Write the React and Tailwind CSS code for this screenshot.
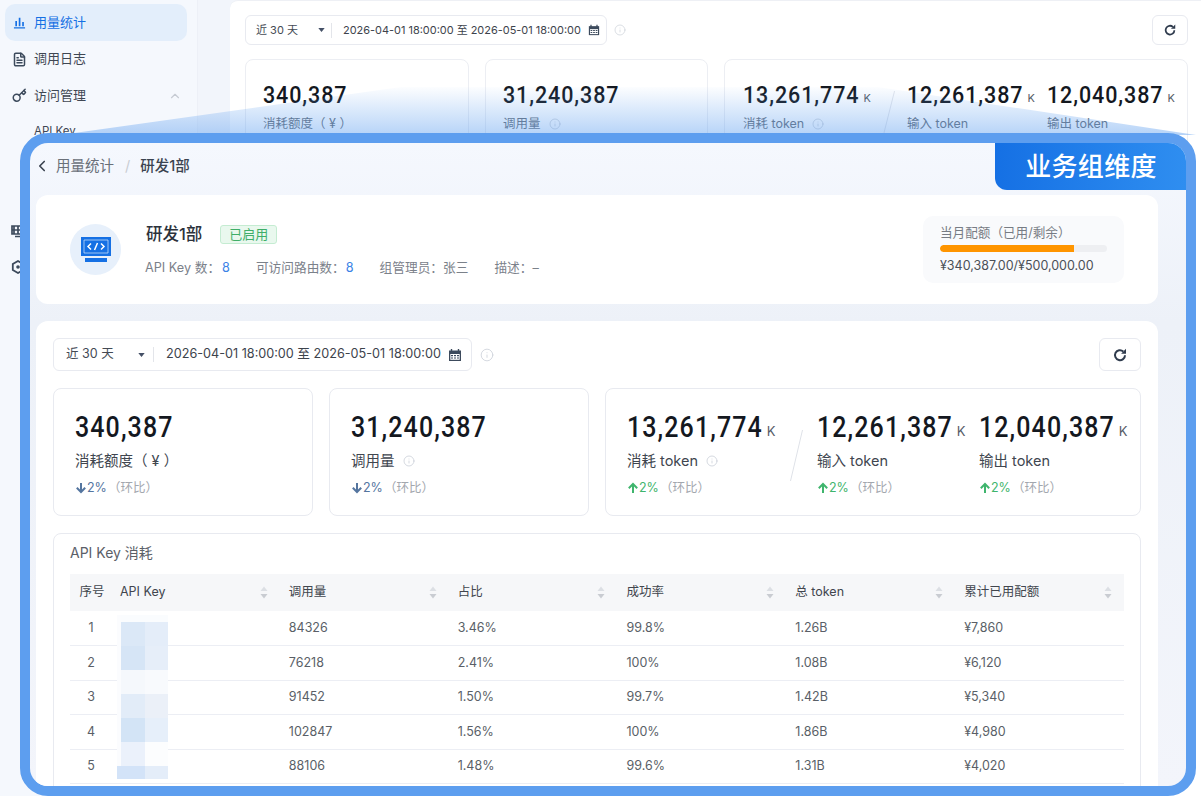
import { ChevronLeft, ChevronUp, Info, Key, FileText } from 'lucide-react'

const rows = [
  ['1', '84326', '3.46%', '99.8%', '1.26B', '¥7,860'],
  ['2', '76218', '2.41%', '100%', '1.08B', '¥6,120'],
  ['3', '91452', '1.50%', '99.7%', '1.42B', '¥5,340'],
  ['4', '102847', '1.56%', '100%', '1.86B', '¥4,980'],
  ['5', '88106', '1.48%', '99.6%', '1.31B', '¥4,020'],
]

const columns = ['API Key', '调用量', '占比', '成功率', '总 token', '累计已用配额']

// mosaic over the masked key column, written out row by row
const mosaic = [
  ['h-[7px] bg-[#fafcfe]', 'h-[7px] bg-[#fafcfe]'],
  ['h-[24px] bg-[#dbe8f7]', 'h-[24px] bg-[#e4edf9]'],
  ['h-[24px] bg-[#d6e5f6]', 'h-[24px] bg-[#e6eef9]'],
  ['h-[24px] bg-[#f5f8fc]', 'h-[24px] bg-[#f8fafd]'],
  ['h-[24px] bg-[#e2ecf8]', 'h-[24px] bg-[#ebf0f8]'],
  ['h-[24px] bg-[#d3e4f6]', 'h-[24px] bg-[#e6effa]'],
  ['h-[24px] bg-[#ebf1fb]', 'h-[24px] bg-[#fcfdfe]'],
  ['h-[13px] bg-[#d3e3f8]', 'h-[13px] bg-[#e4edf9]'],
]

function CalendarIcon({ className }) {
  return (
    <svg viewBox="0 0 14 14" className={className}>
      <path d="M1 2.5h12v10.5H1z" fill="#3c4a5c" />
      <path d="M3.5 1v2.5M10.5 1v2.5" stroke="#3c4a5c" strokeWidth="1.4" />
      <path d="M2.3 6h9.4v5.8H2.3z" fill="#fff" />
      <path d="M3 7h2v1.2H3zM6 7h2v1.2H6zM9 7h2v1.2H9zM3 9.4h2v1.2H3zM6 9.4h2v1.2H6zM9 9.4h2v1.2H9z" fill="#3c4a5c" />
    </svg>
  )
}

function ReloadIcon({ className }) {
  return (
    <svg viewBox="0 0 16 16" className={className}>
      <path d="M13 8.2a5 5 0 1 1-1.7-3.8" fill="none" stroke="#2f3b4d" strokeWidth="2" />
      <path d="M14 1.8v4.9H9.1z" fill="#2f3b4d" />
    </svg>
  )
}

function SortIcon() {
  return (
    <svg viewBox="0 0 8 13" className="w-[8px] h-[13px] shrink-0">
      <path d="M4 0.5L7.5 5H.5z" fill="#dcdfe4" />
      <path d="M4 12.5L.5 8h7z" fill="#c9ccd2" />
    </svg>
  )
}

function BarsIcon() {
  return (
    <svg viewBox="0 0 14 14" className="w-[13px] h-[13px]">
      <path d="M2.5 5.5h1.8v5.5H2.5zM6.2 2h1.8v9H6.2zM9.9 6.5h1.8V11H9.9zM1 12.2h12v1.3H1z" fill="#1570e4" />
    </svg>
  )
}

function TrendArrow({ up }) {
  return (
    <svg viewBox="0 0 12 12" className="w-[12px] h-[12px]">
      {up ? (
        <path d="M6 11V2M1.8 6.2L6 2l4.2 4.2" fill="none" stroke="#3fb56d" strokeWidth="2" />
      ) : (
        <path d="M6 1v9M1.8 5.8L6 10l4.2-4.2" fill="none" stroke="#54759f" strokeWidth="2" />
      )}
    </svg>
  )
}

function Slash({ className }) {
  return (
    <svg viewBox="0 0 13 51" preserveAspectRatio="none" className={className}>
      <path d="M12.5 0L.5 51" stroke="#dfe2e8" strokeWidth="1" fill="none" />
    </svg>
  )
}

function Change({ up }) {
  return (
    <div className="flex items-center text-[12.5px] leading-[16px] mt-[9px] h-[16px]">
      <TrendArrow up={up} />
      <span className={up ? 'text-[#3fb56d]' : 'text-[#54759f]'}>2%</span>
      <span className="text-[#a3a7ae] ml-[1px]">（环比）</span>
    </div>
  )
}

function Stat({ value, unit, label, info, up, down, small }) {
  return (
    <div>
      <div className={`flex items-baseline ${small ? 'h-[28px]' : 'h-[32px]'}`}>
        <span className={`inline-block scale-y-[1.15] font-['Roboto',sans-serif] font-medium text-[#14181f] whitespace-nowrap ${small ? 'text-[21.5px] leading-[28px] tracking-[0.9px]' : 'text-[25px] leading-[32px] tracking-[1.1px]'}`}>
          {value}
        </span>
        {unit && <span className={`text-[#555b66] ${small ? 'text-[11px] ml-[4px]' : 'text-[13px] ml-[4px]'}`}>{unit}</span>}
      </div>
      <div className={`flex items-center ${small ? 'text-[12.5px] leading-[16px] mt-[7px] text-[#666c75]' : 'text-[14.5px] leading-[20px] mt-[7px] text-[#40464f]'}`}>
        <span>{label}</span>
        {info && <Info className="text-[#c3c9d3] w-[12px] h-[12px] ml-[8px]" strokeWidth={1.4} />}
      </div>
      {up && <Change up />}
      {down && <Change />}
    </div>
  )
}

function Toolbar({ small }) {
  return (
    <div className="flex items-center">
      <div className={`flex items-center border border-[#e8eaf0] rounded-[6px] bg-white ${small ? 'h-[30px] w-[362px] pl-[10px]' : 'h-[33px] w-[419px] pl-[12px]'}`}>
        <span className={`text-[#444a54] whitespace-nowrap ${small ? 'text-[11px] w-[62px]' : 'text-[12.5px] w-[72px]'}`}>近 30 天</span>
        <svg viewBox="0 0 8 5" className="w-[7px] h-[4px]">
          <path d="M0 0h8L4 5z" fill="#445066" />
        </svg>
        <span className={`w-px h-[15px] bg-[#e3e5ea] ${small ? 'ml-[6px] mr-[11px]' : 'ml-[8px] mr-[12px]'}`} />
        <span className={`text-[#3d434c] whitespace-nowrap ${small ? 'text-[10.95px]' : 'text-[12.65px]'}`}>2026-04-01 18:00:00 至 2026-05-01 18:00:00</span>
        <CalendarIcon className={`ml-auto ${small ? 'w-[12px] h-[12px] mr-[6px]' : 'w-[14px] h-[14px] mr-[9px]'}`} />
      </div>
      <Info className={`text-[#c8cdd6] ${small ? 'w-[12px] h-[12px] ml-[7px]' : 'w-[14px] h-[14px] ml-[8px]'}`} strokeWidth={1.3} />
      <button className={`ml-auto flex items-center justify-center border border-[#e8eaf0] rounded-[6px] bg-white ${small ? 'w-[36px] h-[30px]' : 'w-[42px] h-[33px]'}`}>
        <ReloadIcon className={small ? 'w-[14px] h-[14px]' : 'w-[16px] h-[16px]'} />
      </button>
    </div>
  )
}

function Background() {
  return (
    <div className="flex h-full bg-[#f2f5fb]">
      {/* Sidebar */}
      <div className="w-[198px] shrink-0 bg-[#f5f8fd] border-r border-[#edf0f7] pl-[5px] pr-[10px] pt-[4px] text-[13px] text-[#3f4753]">
        <div className="flex items-center h-[37px] rounded-[10px] bg-[#e3eefb] text-[#1570e4] pl-[8px]">
          <BarsIcon />
          <span className="ml-[8px]">用量统计</span>
        </div>
        <div className="flex items-center h-[36px] pl-[7px]">
          <FileText className="w-[15px] h-[15px] text-[#3c4a5c]" strokeWidth={2.4} />
          <span className="ml-[7px]">调用日志</span>
        </div>
        <div className="flex items-center h-[37px] pl-[7px]">
          <Key className="w-[15px] h-[15px] text-[#3c4a5c]" strokeWidth={2.4} />
          <span className="ml-[7px]">访问管理</span>
          <ChevronUp className="w-[14px] h-[14px] text-[#c6cbd3] ml-auto mr-[5px]" />
        </div>
        <div className="h-[34px] pl-[29px] pt-[9px] text-[11.5px]">API Key</div>
        <div className="h-[65px]" />
        <div className="flex items-center h-[36px] pl-[6px]">
          <svg viewBox="0 0 14 14" className="w-[14px] h-[14px]">
            <path d="M1 2h12v8H1zM4 12.5h6M3 2v8M7 2v8M1 6h12" stroke="#3c4a5c" strokeWidth="1.7" fill="none" />
          </svg>
        </div>
        <div className="flex items-center h-[36px] pl-[6px]">
          <svg viewBox="0 0 14 14" className="w-[14px] h-[14px]">
            <path d="M7 1l5.2 3v6L7 13l-5.2-3V4z" stroke="#3c4a5c" strokeWidth="1.8" fill="none" />
            <circle cx="7" cy="7" r="1.8" fill="#3c4a5c" />
          </svg>
        </div>
      </div>

      {/* Main panel */}
      <div className="flex-1 min-w-0 ml-[32px] bg-white rounded-tl-[8px] border-t border-[#eef0f5] pl-[15px] pr-[13px] pt-[14px]">
        <Toolbar small />
        <div className="flex gap-[16px] mt-[14px] h-[120px]">
          <div className="w-[224px] shrink-0 border border-[#eceef3] rounded-[8px] pl-[17px] pt-[21px]">
            <Stat small value="340,387" label="消耗额度（ ¥ ）" />
          </div>
          <div className="w-[223px] shrink-0 border border-[#eceef3] rounded-[8px] pl-[17px] pt-[21px]">
            <Stat small value="31,240,387" label="调用量" info />
          </div>
          <div className="flex-1 min-w-0 flex border border-[#eceef3] rounded-[8px] pl-[18px] pt-[21px]">
            <div className="w-[140px] shrink-0">
              <Stat small value="13,261,774" unit="K" label="消耗 token" info />
            </div>
            <Slash className="w-[12px] h-[44px] mt-[10px] mr-[12px] shrink-0" />
            <div className="w-[140px] shrink-0">
              <Stat small value="12,261,387" unit="K" label="输入 token" />
            </div>
            <Stat small value="12,040,387" unit="K" label="输出 token" />
          </div>
        </div>
      </div>
    </div>
  )
}

function Detail() {
  return (
    <div className="relative h-full overflow-hidden rounded-[18px] bg-gradient-to-b from-[#f5f8fe] via-[#edf1f8] via-[28%] to-[#f3f5fb]">
      {/* Dimension tag */}
      <div className="absolute top-0 right-0 w-[191px] h-[47px] rounded-bl-[12px] bg-gradient-to-r from-[#1570e4] to-[#2f8ef0] flex items-center justify-center text-white text-[26px] font-medium tracking-[0.3px] pl-[1px] z-10">
        业务组维度
      </div>

      {/* Breadcrumb */}
      <div className="flex items-center h-[52px] pl-[3px] text-[14.5px] pb-[7px]">
        <ChevronLeft className="w-[18px] h-[18px] text-[#3b4350]" strokeWidth={2.2} />
        <span className="ml-[5px] text-[#6a7079]">用量统计</span>
        <span className="text-[#c9cdd3] ml-[11px] mr-[10px]">/</span>
        <span className="text-[#3b4350] font-medium">研发1部</span>
      </div>

      <div className="w-[1122px] ml-[6px]">
        {/* Group summary */}
        <div className="flex items-center h-[109px] bg-white rounded-[12px] pl-[34px] pr-[34px]">
          <div className="w-[51px] h-[51px] rounded-full bg-[#e7f0fb] flex items-center justify-center shrink-0">
            <svg viewBox="0 0 30 25" className="w-[30px] h-[25px]">
              <path d="M0 0h30v19H0z" fill="#1570e4" />
              <path d="M3 3h24v13H3z" fill="none" stroke="#d8e8fb" strokeWidth="0.7" />
              <path d="M10 6.5L7 9.5l3 3M20 6.5l3 3-3 3M16.5 6l-3 7" fill="none" stroke="#fff" strokeWidth="1.5" />
              <path d="M4 21h22v4H4z" fill="#1570e4" />
            </svg>
          </div>
          <div className="ml-[24px]">
            <div className="flex items-center">
              <span className="ml-[1px] text-[16.5px] font-medium text-[#2c323b]">研发1部</span>
              <span className="ml-[18px] h-[19px] px-[8px] flex items-center text-[13px] text-[#3fae68] bg-[#e9f8ee] border border-[#c5ecd2] rounded-[3px]">已启用</span>
            </div>
            <div className="flex items-center text-[12.7px] text-[#7b818a] mt-[11px]">
              <span>API Key 数：</span>
              <span className="text-[#3b82e6] ml-[2px]">8</span>
              <span className="ml-[26px]">可访问路由数：</span>
              <span className="text-[#3b82e6] ml-[1px]">8</span>
              <span className="ml-[26px]">组管理员：张三</span>
              <span className="ml-[26px]">描述：–</span>
            </div>
          </div>
          <div className="ml-auto w-[201px] h-[67px] rounded-[10px] bg-[#f9fafc] pl-[17px] pr-[17px] pt-[9px]">
            <div className="text-[12.6px] text-[#777c84] leading-[16px]">当月配额（已用/剩余）</div>
            <div className="h-[7px] rounded-full bg-[#eeeff2] mt-[4px] overflow-hidden">
              <div className="h-full w-[80%] rounded-l-full bg-[#ff9500]" />
            </div>
            <div className="text-[12.5px] text-[#4b5058] mt-[5px] leading-[17px] whitespace-nowrap">¥340,387.00/¥500,000.00</div>
          </div>
        </div>

        {/* Usage */}
        <div className="mt-[17px] bg-white rounded-[12px] px-[17px] pt-[17px] h-[500px]">
          <Toolbar />
          <div className="flex gap-[16px] mt-[17px] h-[128px]">
            <div className="w-[260px] shrink-0 border border-[#e8eaf0] rounded-[8px] pl-[21px] pt-[23px]">
              <Stat value="340,387" label="消耗额度（ ¥ ）" down />
            </div>
            <div className="w-[260px] shrink-0 border border-[#e8eaf0] rounded-[8px] pl-[21px] pt-[23px]">
              <Stat value="31,240,387" label="调用量" info down />
            </div>
            <div className="flex-1 min-w-0 flex border border-[#e8eaf0] rounded-[8px] pl-[21px] pt-[23px]">
              <div className="w-[163px] shrink-0">
                <Stat value="13,261,774" unit="K" label="消耗 token" info up />
              </div>
              <Slash className="w-[13px] h-[51px] mt-[18px] mr-[14px] shrink-0" />
              <div className="w-[162px] shrink-0">
                <Stat value="12,261,387" unit="K" label="输入 token" up />
              </div>
              <Stat value="12,040,387" unit="K" label="输出 token" up />
            </div>
          </div>

          <div className="relative mt-[17px] border border-[#e8eaf0] rounded-[8px] px-[16px] pt-[9px] h-[300px]">
            <div className="text-[14px] text-[#5b6068] leading-[20px]">API Key 消耗</div>
            <table className="w-full table-fixed mt-[11px] text-[12.5px] text-[#5a5f67]">
              <thead>
                <tr className="h-[37px] bg-[#f6f7f9] text-[#41464e]">
                  <th className="w-[41px] font-normal text-center pl-[3px]">序号</th>
                  {columns.map(name => (
                    <th key={name} className="font-normal text-left pl-[9px] pr-[12px]">
                      <div className="flex items-center justify-between">
                        <span>{name}</span>
                        <SortIcon />
                      </div>
                    </th>
                  ))}
                </tr>
              </thead>
              <tbody>
                {rows.map(row => (
                  <tr key={row[0]} className="h-[34.6px] border-b border-[#eceef4]">
                    <td className="text-center pl-[1px]">{row[0]}</td>
                    <td />
                    {row.slice(1).map((cell, i) => (
                      <td key={i} className="pl-[9px]">{cell}</td>
                    ))}
                  </tr>
                ))}
              </tbody>
            </table>

            {/* Masked keys */}
            <div className="absolute left-[63px] top-[81px] w-[51px] flex flex-col bg-[#fbfcfe]">
              {mosaic.map((cells, i) => (
                <div key={i} className="flex">
                  <div className={`${i === mosaic.length - 1 ? 'w-[28px]' : 'ml-[4px] w-[24px]'} ${cells[0]}`} />
                  <div className={`w-[23px] ${cells[1]}`} />
                </div>
              ))}
            </div>
          </div>
        </div>
      </div>
    </div>
  )
}

export default function App() {
  return (
    <div className="relative w-[1201px] h-[796px] overflow-hidden bg-white font-['Inter','Noto_Sans_CJK_SC',sans-serif]">
      <Background />

      {/* Zoom funnel from the page to the detail frame */}
      <div className="absolute left-[60px] top-[85px] w-[1136px] h-[50px] [clip-path:polygon(0_100%,30%_4%,72%_4%,100%_100%)] bg-gradient-to-b from-[#5d9eef]/0 to-[#5d9eef]/45" />

      {/* Detail frame */}
      <div className="absolute left-[20px] top-[133px] w-[1176px] h-[663px] border-[10px] border-[#5d9eef] rounded-[28px] bg-[#5d9eef]">
        <Detail />
      </div>
    </div>
  )
}
